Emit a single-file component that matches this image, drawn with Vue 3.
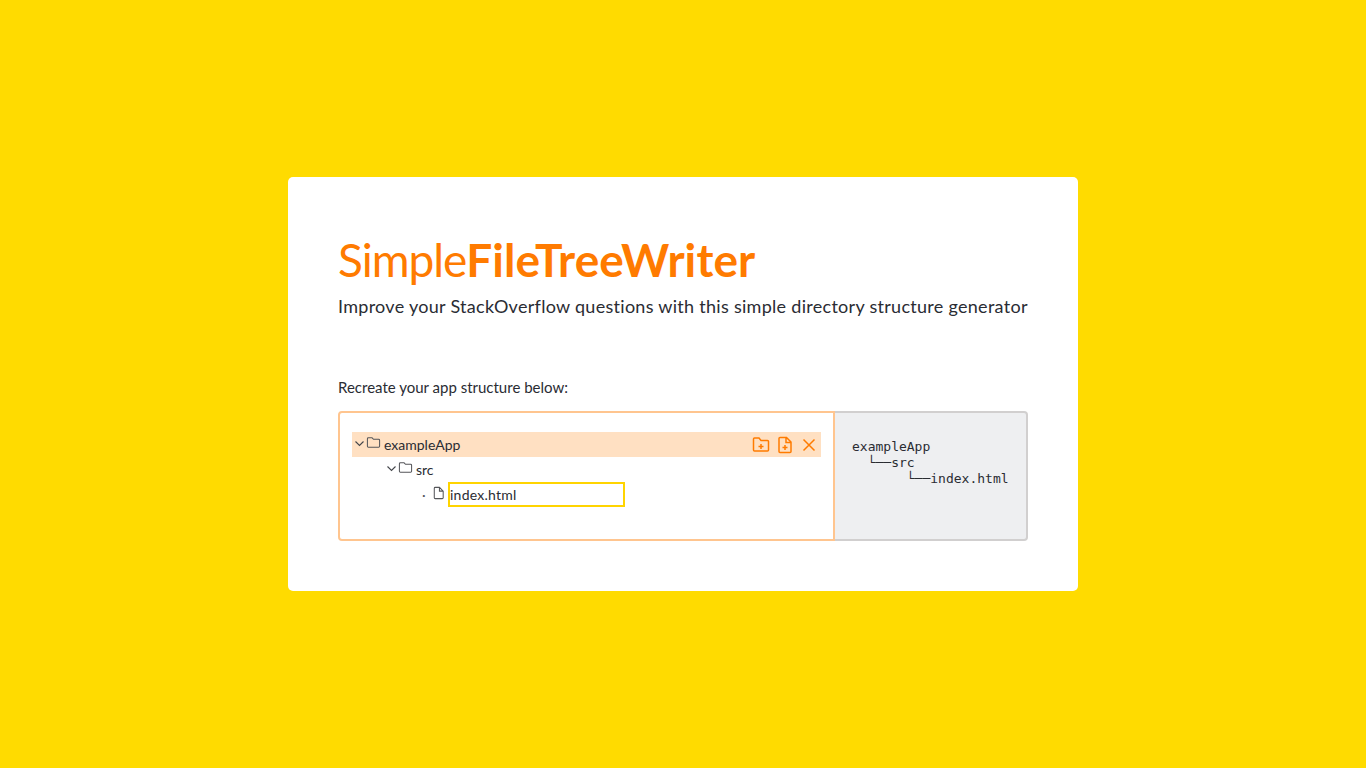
<script setup>
const rows = [
  { name: 'exampleApp', kind: 'folder', level: 0 },
  { name: 'src', kind: 'folder', level: 1 },
  { name: 'index.html', kind: 'file', level: 2 },
]
const output = 'exampleApp\n  └──src\n       └──index.html'
</script>

<template>
  <main class="page">
    <section class="card">
      <h1 class="title"><span class="light">Simple</span><strong>FileTreeWriter</strong></h1>
      <p class="subtitle">Improve your StackOverflow questions with this simple directory structure generator</p>
      <p class="prompt">Recreate your app structure below:</p>
      <div class="editor">
        <div class="tree">
          <div
            v-for="(row, i) in rows"
            :key="row.name"
            class="row"
            :class="{ active: i === 0 }"
          >
            <span class="indent" :class="'lvl' + row.level"></span>
            <svg v-if="row.kind === 'folder'" class="chev" viewBox="0 0 12 12"><path d="M1.500 4.500 5.500 8.500 9.500 4.500" /></svg>
            <span v-else class="dot">·</span>
            <svg v-if="row.kind === 'folder'" class="ico" viewBox="0 0 16 16"><path d="M2.500 2.500C1.800 2.500 1.500 3 1.500 3.500v8c0 .7.4 1 1 1h11c.6 0 1-.4 1-1V5c0-.6-.4-1-1-1H8L6.500 2.500z" /></svg>
            <svg v-else class="ico" viewBox="0 0 16 16"><path d="M4.500 2h4.500L13 6v7c0 .6-.4 1-1 1H4.500c-.6 0-1-.4-1-1V3c0-.6.4-1 1-1z M9 2v4h4" /></svg>
            <input v-if="row.kind === 'file'" class="edit" :value="row.name" />
            <span v-else class="label">{{ row.name }}</span>
            <span v-if="i === 0" class="actions">
              <svg class="act" viewBox="0 0 18 18"><path d="M2.500 2.500h4.500l2 2.500h6.500c.6 0 1 .4 1 1v8.500c0 .6-.4 1-1 1h-13c-.6 0-1-.4-1-1v-11c0-.6.4-1 1-1z" transform="translate(0 -.5)" /><path d="M9 8v5M6.500 10.500h5" /></svg>
              <svg class="act" viewBox="0 0 18 18"><path d="M4 1.500h6.500L15 6v9.500c0 .6-.4 1-1 1H4c-.6 0-1-.4-1-1v-13c0-.6.4-1 1-1z M10 1.500V6.500h5" /><path d="M9 9v5M6.500 11.500h5" /></svg>
              <svg class="act close" viewBox="0 0 18 18"><path d="M3.500 3.500l11 11M14.500 3.500l-11 11" /></svg>
            </span>
          </div>
        </div>
        <pre class="output">{{ output }}</pre>
      </div>
    </section>
  </main>
</template>

<style>
html, body { margin: 0; }
</style>

<style scoped>
.page {
  min-height: 768px;
  background: #ffdb00;
  display: flex;
  align-items: center;
  justify-content: center;
  font-family: "Lato", "Noto Sans", sans-serif;
  color: #2a2c33;
}
.card {
  width: 690px;
  height: 314px;
  padding: 50px;
  background: #fff;
  border-radius: 5px;
}
.title {
  margin: 7px 0 0;
  font-size: 46px;
  line-height: 52px;
  font-weight: 400;
  color: #ff7b00;
}
.light { letter-spacing: -1.05px; }
.title strong { font-weight: 700; letter-spacing: .08px; }
.subtitle {
  margin: 8px 0 0;
  font-size: 18px;
  line-height: 24px;
  letter-spacing: .285px;
  white-space: nowrap;
}
.prompt {
  margin: 60px 0 0;
  font-size: 15px;
  line-height: 18px;
}
.editor {
  display: flex;
  height: 130px;
  margin-top: 15px;
}
.tree {
  box-sizing: border-box;
  width: 497px;
  padding: 19px 12px 0;
  border: 2px solid #ffc58f;
  border-radius: 4px 0 0 4px;
}
.row {
  display: flex;
  align-items: center;
  height: 25px;
  font-size: 14px;
}
.row.active { background: #ffe0c2; }
.indent { flex: none; }
.lvl0 { width: 2px; }
.lvl1 { width: 34px; }
.lvl2 { width: 70px; }
.chev {
  width: 12px;
  height: 12px;
  margin-top: -3px;
  fill: none;
  stroke: #44464b;
  stroke-width: 1.1;
}
.dot { width: 9px; text-align: left; color: #55575c; }
.ico {
  width: 15px;
  height: 16px;
  margin: -3px 2px 0 0;
  fill: none;
  stroke: #55565a;
  stroke-width: 1.1;
}
.label { margin-left: 1px; }
.edit {
  box-sizing: border-box;
  width: 177px;
  height: 25px;
  padding: 0;
  border: 2px solid #ffd400;
  outline: none;
  font: inherit;
  letter-spacing: .25px;
  color: inherit;
  background: #fff;
}
.actions {
  margin-left: auto;
  display: flex;
  align-items: center;
  gap: 6px;
  padding-right: 3px;
}
.act {
  width: 18px;
  height: 18px;
  fill: none;
  stroke: #ff7b00;
  stroke-width: 1.5;
}
.output {
  box-sizing: border-box;
  flex: 1;
  margin: 0;
  padding: 26px 0 0 17px;
  background: #eeeff1;
  border: 2px solid #d1cfcf;
  border-left: none;
  border-radius: 0 4px 4px 0;
  font-family: "DejaVu Sans Mono", monospace;
  font-size: 13px;
  line-height: 16px;
}
</style>
